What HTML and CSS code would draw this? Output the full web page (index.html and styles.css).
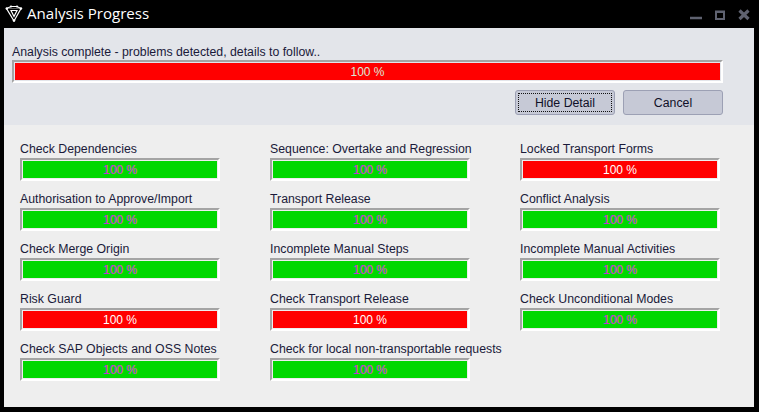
FILE: index.html
```html
<!DOCTYPE html>
<html lang="en">
<head>
<meta charset="utf-8">
<title>Analysis Progress</title>
<link rel="stylesheet" href="styles.css">
</head>
<body>
<div class="window">
  <header class="titlebar">
    <svg class="logo" width="18" height="18" viewBox="0 0 18 18" fill="none" stroke="#fff">
      <path d="M1.500 4.500L6 2.500H12L16 4.500L9 17Z" stroke-width="1.200"/>
      <path d="M6 6.500H12L9 12.500Z" stroke-width="1.200"/>
      <path d="M1.500 4.500H16" stroke-width="1" stroke-opacity=".35"/>
      <circle cx="1.800" cy="4.500" r="1.200" fill="#fff" stroke="none"/>
      <circle cx="16" cy="4.500" r="1.200" fill="#fff" stroke="none"/>
      <circle cx="6" cy="2.500" r="1.100" fill="#fff" stroke="none"/>
      <circle cx="12" cy="2.500" r="1.100" fill="#fff" stroke="none"/>
      <circle cx="9" cy="16.500" r="1.300" fill="#fff" stroke="none"/>
    </svg>
    <span class="title">Analysis Progress</span>
    <div class="controls">
      <svg width="66" height="16" viewBox="0 0 66 16" fill="none" stroke="#5f6270">
        <path d="M1 13H13" stroke-width="2.500"/>
        <rect x="27" y="7" width="8" height="7" stroke-width="2"/>
        <path d="M26 6.500H36" stroke-width="2"/>
        <path d="M50.500 5.500L59.500 14M59.500 5.500L50.500 14" stroke-width="3.200"/>
      </svg>
    </div>
  </header>
  <section class="summary">
    <div class="label">Analysis complete - problems detected, details to follow..</div>
    <div class="bar bar-wide"><div class="fill red">100 %</div></div>
    <div class="actions">
      <button class="btn focused"><span>Hide Detail</span></button>
      <button class="btn"><span>Cancel</span></button>
    </div>
  </section>
  <section class="details">
    <div class="item"><div class="label">Check Dependencies</div><div class="bar"><div class="fill green">100 %</div></div></div>
    <div class="item"><div class="label">Sequence: Overtake and Regression</div><div class="bar"><div class="fill green">100 %</div></div></div>
    <div class="item"><div class="label">Locked Transport Forms</div><div class="bar"><div class="fill red">100 %</div></div></div>
    <div class="item"><div class="label">Authorisation to Approve/Import</div><div class="bar"><div class="fill green">100 %</div></div></div>
    <div class="item"><div class="label">Transport Release</div><div class="bar"><div class="fill green">100 %</div></div></div>
    <div class="item"><div class="label">Conflict Analysis</div><div class="bar"><div class="fill green">100 %</div></div></div>
    <div class="item"><div class="label">Check Merge Origin</div><div class="bar"><div class="fill green">100 %</div></div></div>
    <div class="item"><div class="label">Incomplete Manual Steps</div><div class="bar"><div class="fill green">100 %</div></div></div>
    <div class="item"><div class="label">Incomplete Manual Activities</div><div class="bar"><div class="fill green">100 %</div></div></div>
    <div class="item"><div class="label">Risk Guard</div><div class="bar"><div class="fill red">100 %</div></div></div>
    <div class="item"><div class="label">Check Transport Release</div><div class="bar"><div class="fill red">100 %</div></div></div>
    <div class="item"><div class="label">Check Unconditional Modes</div><div class="bar"><div class="fill green">100 %</div></div></div>
    <div class="item"><div class="label">Check SAP Objects and OSS Notes</div><div class="bar"><div class="fill green">100 %</div></div></div>
    <div class="item"><div class="label">Check for local non-transportable requests</div><div class="bar"><div class="fill green">100 %</div></div></div>
  </section>
</div>
</body>
</html>
```
FILE: styles.css
```css
* { box-sizing: border-box; }
html, body { margin: 0; height: 100%; }
body {
  background: #000;
  font-family: "Liberation Sans", Arial, sans-serif;
  font-size: 12.300px;
  color: #1a1a3a;
  overflow: hidden;
}
.window {
  width: 759px;
  height: 412px;
  padding: 0 5px 5px 4px;
  display: flex;
  flex-direction: column;
}
.titlebar {
  height: 28px;
  flex: none;
  display: flex;
  align-items: center;
  color: #fff;
  padding-left: 1px;
}
.logo { flex: none; margin-top: -2px; }
.title {
  font-family: "Open Sans", "Liberation Sans", sans-serif;
  font-size: 15.100px;
  margin-left: 4px;
  margin-top: -3px;
}
.controls { margin-left: auto; margin-top: -2px; margin-right: -1px; display: flex; }
.summary {
  height: 97px;
  flex: none;
  background: #e3e5ea;
  padding: 17px 31px 0 8px;
}
.label {
  height: 15px;
  line-height: 15px;
  white-space: nowrap;
}
.bar {
  height: 23px;
  width: 200px;
  border: 2px solid;
  border-color: #a4a4a4 #fff #fff #a4a4a4;
  padding: 1px;
}
.bar-wide { width: 711px; }
.fill {
  height: 17px;
  line-height: 19px;
  text-align: center;
  font-size: 12px;
}
.red { background: #ff0000; color: #fff; }
.green {
  background: #00d800;
  color: #c42cdc;
  text-shadow: 0.5px 0 0 rgba(245, 225, 150, 0.5);
}
.bar-wide .red { color: #d8e8d8; }
.actions {
  display: flex;
  justify-content: flex-end;
  gap: 8px;
  margin-top: 7px;
}
.btn {
  width: 100px;
  height: 25px;
  padding: 2px;
  border: 1px solid #9ca0b4;
  border-radius: 3px;
  background: #c6c9d6;
  font: inherit;
  color: #101028;
  display: flex;
}
.btn span {
  flex: 1;
  display: flex;
  align-items: center;
  justify-content: center;
  border: 1px dotted transparent;
}
.btn.focused span { border-color: #111; }
.details {
  flex: 1;
  background: #eeeeee;
  padding: 16px 0 0 16px;
  display: grid;
  grid-template-columns: repeat(3, 250px);
  grid-auto-rows: 50px;
}
.item .label { height: 17px; line-height: 17px; }
```
